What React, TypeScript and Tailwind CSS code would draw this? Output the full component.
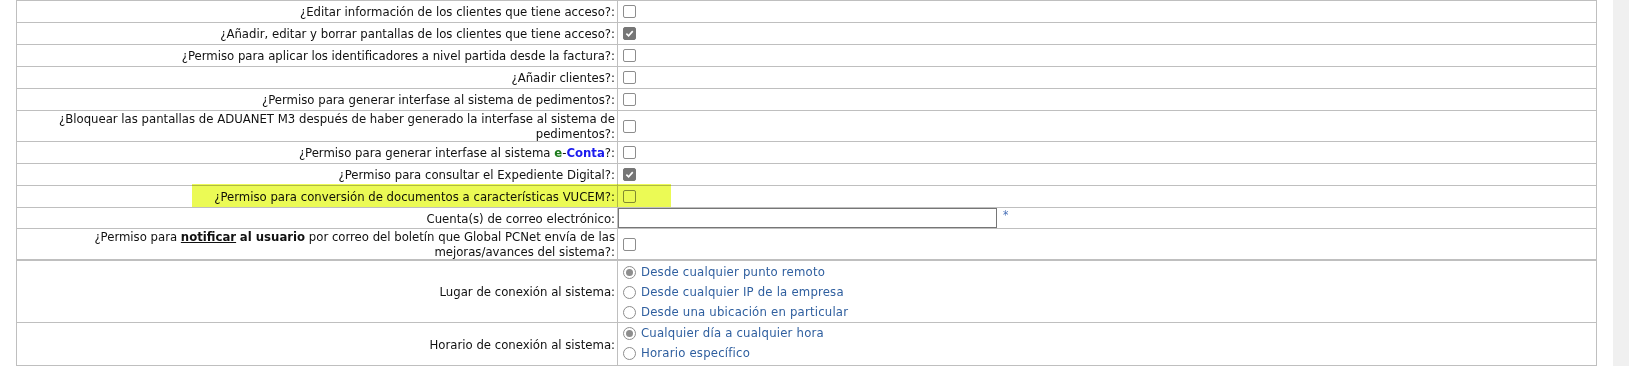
import React from "react";

// Checkbox / radio drawn to look like the disabled native controls in the screenshot
const Box = ({ checked = false }: { checked?: boolean }) => (
  <span
    className={`inline-flex items-center justify-center w-[13px] h-[13px] rounded-[2px] border ml-[5px] ${
      checked ? "bg-[#767676] border-[#767676]" : "bg-white border-[#8d8d8d]"
    }`}
  >
    {checked && (
      <svg width="9" height="9" viewBox="0 0 10 10">
        <path d="M1.5 5.2 L4 7.6 L8.6 2.4" fill="none" stroke="#fff" strokeWidth="1.8" />
      </svg>
    )}
  </span>
);

const Radio = ({ checked = false, label }: { checked?: boolean; label: string }) => (
  <div className="flex items-center h-[20px]">
    <span className="inline-flex items-center justify-center w-[13px] h-[13px] rounded-full border border-[#8d8d8d] bg-white ml-[5px] mr-[5px] shrink-0">
      {checked && <span className="w-[7px] h-[7px] rounded-full bg-[#8d8d8d]" />}
    </span>
    <span className="text-[#2f5f9f] tracking-[0.2px]">{label}</span>
  </div>
);

const td = "border border-[#bfbfbf]";
const labelTd = `${td} text-right pr-[2px] pl-1 py-0 leading-[15px] align-middle`;

type Row = { label: React.ReactNode; checked?: boolean };

const rows: Row[] = [
  { label: "¿Editar información de los clientes que tiene acceso?:" },
  { label: "¿Añadir, editar y borrar pantallas de los clientes que tiene acceso?:", checked: true },
  { label: "¿Permiso para aplicar los identificadores a nivel partida desde la factura?:" },
  { label: "¿Añadir clientes?:" },
  { label: "¿Permiso para generar interfase al sistema de pedimentos?:" },
  {
    label:
      "¿Bloquear las pantallas de ADUANET M3 después de haber generado la interfase al sistema de pedimentos?:",
  },
  {
    label: (
      <>
        ¿Permiso para generar interfase al sistema{" "}
        <b className="text-[#1b7a1b]">e</b>-<b className="text-[#1a1aee]">Conta</b>?:
      </>
    ),
  },
  { label: "¿Permiso para consultar el Expediente Digital?:", checked: true },
  { label: "¿Permiso para conversión de documentos a características VUCEM?:" },
];

export default function App() {
  return (
    <div className="flex w-[1629px] h-[366px] bg-white text-[13px] text-[#111] font-['DejaVu_Sans_Condensed','DejaVu_Sans',sans-serif] font-stretch-condensed overflow-hidden">
      <div className="relative pl-4">
        <table className="table-fixed border-collapse w-[1581px]">
          <colgroup>
            <col className="w-[601px]" />
            <col />
          </colgroup>
          <tbody>
            {rows.map((r, i) => (
              <tr key={i}>
                <td className={labelTd}>{r.label}</td>
                <td className={`${td} p-0 h-[22px] align-middle`}>
                  <div className="flex items-center h-[19px]">
                    <Box checked={r.checked} />
                  </div>
                </td>
              </tr>
            ))}
            <tr>
              <td className={labelTd}>Cuenta(s) de correo electrónico:</td>
              <td className={`${td} p-0 h-[20px] align-middle`}>
                <div className="flex items-center">
                  <input
                    type="text"
                    className="w-[379px] h-[20px] border border-[#767676] bg-white"
                  />
                  <span className="ml-[6px] text-[#4a72b8] text-[12px] -mt-[6px]">*</span>
                </div>
              </td>
            </tr>
            <tr>
              <td className={`${labelTd} border-b-2`}>
                ¿Permiso para <b className="underline">notificar</b> <b>al usuario</b> por correo del
                boletín que Global PCNet envía de las mejoras/avances del sistema?:
              </td>
              <td className={`${td} border-b-2 p-0 align-middle`}>
                <div className="flex items-center h-[19px]">
                  <Box />
                </div>
              </td>
            </tr>
            <tr>
              <td className={labelTd}>Lugar de conexión al sistema:</td>
              <td className={`${td} p-0 pt-[1px] align-middle`}>
                <Radio checked label="Desde cualquier punto remoto" />
                <Radio label="Desde cualquier IP de la empresa" />
                <Radio label="Desde una ubicación en particular" />
              </td>
            </tr>
            <tr>
              <td className={labelTd}>Horario de conexión al sistema:</td>
              <td className={`${td} p-0 pb-[2px] align-middle`}>
                <Radio checked label="Cualquier día a cualquier hora" />
                <Radio label="Horario específico" />
              </td>
            </tr>
          </tbody>
        </table>
        {/* yellow marker highlight over the VUCEM row */}
        <div className="absolute left-[192px] top-[184px] w-[479px] h-[23px] bg-[#ebfa55] mix-blend-multiply pointer-events-none" />
      </div>
      <div className="flex-1" />
      <div className="w-4 bg-[#f0f0f0]" />
    </div>
  );
}
